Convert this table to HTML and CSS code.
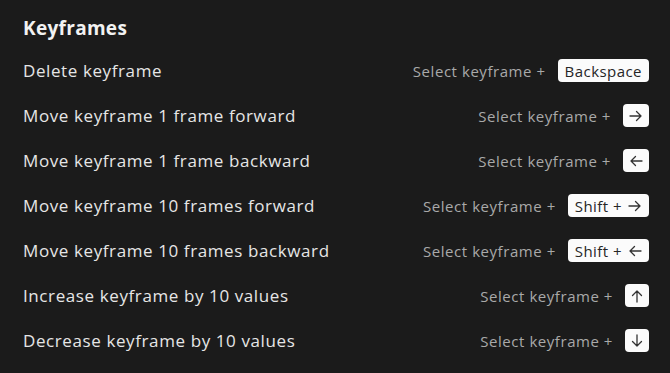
FILE: index.html
```html
<!DOCTYPE html>
<html lang="en">
<head>
    <meta charset="UTF-8">
    <meta name="viewport" content="width=device-width, initial-scale=1.0">
    <title>Keyframes shortcuts</title>
    <link rel="stylesheet" href="styles.css">
</head>
<body>
    <section class="shortcuts">
        <h2 class="shortcuts-title">Keyframes</h2>

        <div class="row">
            <span class="label">Delete keyframe</span>
            <span class="combo">Select keyframe + <kbd class="key">Backspace</kbd></span>
        </div>

        <div class="row">
            <span class="label">Move keyframe 1 frame forward</span>
            <span class="combo">Select keyframe + <kbd class="key key-icon">
                <svg width="14" height="12" viewBox="0 0 14 12"><path d="M1 6h11M7.5 1.5L12 6l-4.5 4.5" /></svg>
            </kbd></span>
        </div>

        <div class="row">
            <span class="label">Move keyframe 1 frame backward</span>
            <span class="combo">Select keyframe + <kbd class="key key-icon">
                <svg width="14" height="12" viewBox="0 0 14 12"><path d="M13 6H2M6.5 1.5L2 6l4.5 4.5" /></svg>
            </kbd></span>
        </div>

        <div class="row">
            <span class="label">Move keyframe 10 frames forward</span>
            <span class="combo">Select keyframe + <kbd class="key">Shift +
                <svg width="14" height="12" viewBox="0 0 14 12"><path d="M1 6h11M7.5 1.5L12 6l-4.5 4.5" /></svg>
            </kbd></span>
        </div>

        <div class="row">
            <span class="label">Move keyframe 10 frames backward</span>
            <span class="combo">Select keyframe + <kbd class="key">Shift +
                <svg width="14" height="12" viewBox="0 0 14 12"><path d="M13 6H2M6.5 1.5L2 6l4.5 4.5" /></svg>
            </kbd></span>
        </div>

        <div class="row">
            <span class="label">Increase keyframe by 10 values</span>
            <span class="combo">Select keyframe + <kbd class="key key-icon">
                <svg width="12" height="14" viewBox="0 0 12 14"><path d="M6 13V2M1.5 6.5L6 2l4.5 4.5" /></svg>
            </kbd></span>
        </div>

        <div class="row">
            <span class="label">Decrease keyframe by 10 values</span>
            <span class="combo">Select keyframe + <kbd class="key key-icon">
                <svg width="12" height="14" viewBox="0 0 12 14"><path d="M6 1v11M1.5 7.5L6 12l4.5-4.5" /></svg>
            </kbd></span>
        </div>
    </section>
</body>
</html>
```

FILE: styles.css
```css
/* Genel */
body {
    margin: 0;
    background-color: #1b1b1b;
    font-family: "Open Sans", "DejaVu Sans", sans-serif;
    color: #e6e6e6;
}

.shortcuts {
    padding: 12px 21px 0 23px;
}

.shortcuts-title {
    margin: 0;
    font-size: 19px;
    font-weight: 700;
    line-height: 32px;
    letter-spacing: 0.3px;
    color: #f2f2f2;
    margin-bottom: 4px;
}

/* Satirlar */
.row {
    display: flex;
    align-items: center;
    justify-content: space-between;
    height: 45px;
}

.label {
    font-size: 17px;
    letter-spacing: 0.6px;
}

.combo {
    display: flex;
    align-items: center;
    gap: 12px;
    font-size: 15px;
    letter-spacing: 0.55px;
    color: #a9a9a9;
}

/* Tus */
.key {
    display: inline-flex;
    align-items: center;
    gap: 6px;
    height: 23px;
    padding: 0 7px;
    background-color: #fbfbfb;
    color: #262626;
    border-radius: 4px;
    font-family: inherit;
    font-size: 15px;
    letter-spacing: 0.45px;
    box-sizing: border-box;
}

.key-icon {
    padding: 0 6px;
}

.key svg {
    fill: none;
    stroke: #333;
    stroke-width: 1.3;
    stroke-linecap: round;
    stroke-linejoin: round;
}
```
